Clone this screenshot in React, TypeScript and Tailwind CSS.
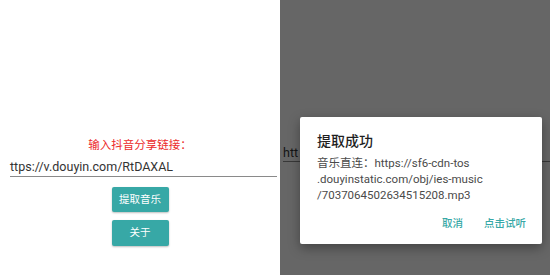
const font = { fontFamily: "Roboto, 'Noto Sans CJK SC', sans-serif" };

export default function App() {
  return (
    <div className="flex w-[550px] h-[275px] overflow-hidden" style={font}>
      {/* ---------------- MAIN SCREEN ---------------- */}
      <div className="w-[280px] h-full bg-white flex flex-col items-center pt-[136px]">
        <p className="text-[11.5px] leading-[18px] text-[#ec2a2a]">输入抖音分享链接：</p>

        <div className="w-full pl-[10px] pr-[3px] mt-[4px]">
          <div className="text-[12.5px] leading-[18px] text-[#333] border-b border-[#8a8a8a] whitespace-nowrap">
            ttps://v.douyin.com/RtDAXAL
          </div>
        </div>

        <button className="mt-[10px] w-[57px] h-[25px] rounded-[2px] bg-[#37a8a6] text-white text-[10.5px] shadow-[0_1px_2px_rgba(0,0,0,0.25)]">
          提取音乐
        </button>
        <button className="mt-[8px] w-[57px] h-[26px] rounded-[2px] bg-[#37a8a6] text-white text-[10.5px] shadow-[0_1px_2px_rgba(0,0,0,0.25)]">
          关于
        </button>
      </div>

      {/* ---------------- DIMMED SCREEN + DIALOG ---------------- */}
      <div className="relative w-[270px] h-full bg-[#666666]">
        <div className="pt-[146px] pl-[3px]">
          <div className="text-[12.5px] leading-[14px] text-[#141414] border-b border-[#383838] pb-[1px]">
            htt
          </div>
        </div>

        <div className="absolute left-[20px] top-[117px] w-[242px] h-[127px] bg-white rounded-[2px] shadow-[0_4px_12px_rgba(0,0,0,0.35)] pl-[17px] pr-[10px] pt-[14px]">
          <h2 className="text-[14px] leading-[20px] font-medium text-[#1f1f1f]">提取成功</h2>
          <p className="mt-[4px] text-[11.5px] leading-[16px] text-[#4a4a4a]">
            音乐直连：https://sf6-cdn-tos
            <br />
            .douyinstatic.com/obj/ies-music
            <br />
            /7037064502634515208.mp3
          </p>
          <div className="flex justify-end gap-[21px] mt-[13px] pr-[6px] text-[10.5px] font-medium text-[#37a8a6]">
            <span>取消</span>
            <span>点击试听</span>
          </div>
        </div>
      </div>
    </div>
  );
}
